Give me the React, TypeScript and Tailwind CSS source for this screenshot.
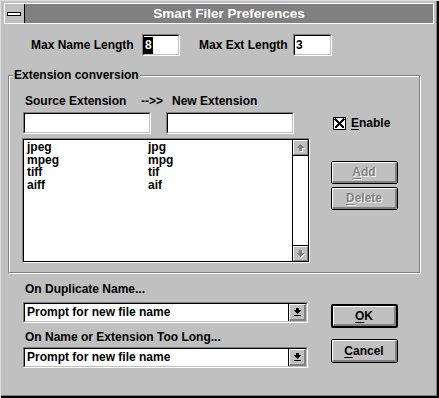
import type { ReactNode } from 'react';

const sans = "font-['Liberation_Sans',Arial,Helvetica,sans-serif]";

function Sunken({ className = '', children }: { className?: string; children?: ReactNode }) {
  return (
    <div className={`border border-t-[#808080] border-l-[#808080] border-b-white border-r-white ${className}`}>
      <div className="flex h-full items-center border border-t-black border-l-black border-b-[#c0c0c0] border-r-[#c0c0c0] bg-white">
        {children}
      </div>
    </div>
  );
}

function Button({
  children,
  disabled,
  isDefault,
  className = '',
}: {
  children: ReactNode;
  disabled?: boolean;
  isDefault?: boolean;
  className?: string;
}) {
  return (
    <div className={`${isDefault ? 'border-2' : 'border'} rounded-[2px] border-black bg-[#c0c0c0] ${className}`}>
      <div className="flex h-full items-center justify-center border-t border-l border-b-2 border-r-2 border-t-white border-l-white border-b-[#808080] border-r-[#808080]">
        <span className={disabled ? 'text-[#808080] [text-shadow:1px_1px_0_#fff]' : 'text-black'}>{children}</span>
      </div>
    </div>
  );
}

function ScrollArrow({ down }: { down?: boolean }) {
  const rows = [
    [3, 1],
    [2, 3],
    [1, 5],
    [0, 7],
    [2, 3],
    [2, 3],
    [2, 3],
  ];
  const ordered = down ? [...rows].reverse() : rows;
  return (
    <svg width="9" height="9" viewBox="0 0 9 9" shapeRendering="crispEdges">
      {ordered.map(([x, w], i) => (
        <rect key={`s${i}`} x={x + 1} y={i + 1} width={w} height={1} fill="#ffffff" />
      ))}
      {ordered.map(([x, w], i) => (
        <rect key={`a${i}`} x={x} y={i} width={w} height={1} fill="#808080" />
      ))}
    </svg>
  );
}

function ScrollButton({ down }: { down?: boolean }) {
  return (
    <div className={`h-[16px] bg-[#c0c0c0] ${down ? 'border-t' : 'border-b'} border-black`}>
      <div className="flex h-full items-center justify-center border-t border-l border-b border-r border-t-white border-l-white border-b-[#808080] border-r-[#808080] pl-[1px] pt-[1px]">
        <ScrollArrow down={down} />
      </div>
    </div>
  );
}

function ComboArrow() {
  return (
    <svg width="7" height="8" viewBox="0 0 7 8" shapeRendering="crispEdges">
      <rect x="2" y="0" width="3" height="2" fill="#000" />
      <rect x="0" y="2" width="7" height="1" fill="#000" />
      <rect x="1" y="3" width="5" height="1" fill="#000" />
      <rect x="2" y="4" width="3" height="1" fill="#000" />
      <rect x="3" y="5" width="1" height="1" fill="#000" />
      <rect x="0" y="7" width="7" height="1" fill="#000" />
    </svg>
  );
}

function Combo({ value }: { value: string }) {
  return (
    <div className="h-[21px] border border-t-[#808080] border-l-[#808080] border-b-white border-r-white">
      <div className="flex h-full border border-t-black border-l-black border-b-[#c0c0c0] border-r-[#c0c0c0] bg-white">
        <span className="flex-1 pl-[2px] leading-[17px]">{value}</span>
        <div className="w-[18px] border-l border-black bg-[#c0c0c0]">
          <div className="flex h-full items-center justify-center border-t border-l border-b-2 border-r-2 border-t-white border-l-white border-b-[#808080] border-r-[#808080]">
            <ComboArrow />
          </div>
        </div>
      </div>
    </div>
  );
}

const conversions = [
  ['jpeg', 'jpg'],
  ['mpeg', 'mpg'],
  ['tiff', 'tif'],
  ['aiff', 'aif'],
];

export default function App() {
  return (
    <div
      className={`${sans} h-[398px] w-[439px] overflow-hidden bg-[#c0c0c0] text-[12px] font-bold leading-[14px] text-black shadow-[inset_1px_1px_0_#dfdfdf,inset_-1px_-1px_0_#000,inset_-2px_-2px_0_#000,inset_-3px_-3px_0_#808080]`}
    >
      {/* title bar */}
      <div className="mx-[4px] mt-[3px] flex h-[21px] w-[430px] border border-white">
        <div className="flex w-[20px] items-center justify-center border-r border-black bg-[#c0c0c0] pr-[1px]">
          <div className="h-[4px] w-[14px] border border-black bg-white" />
        </div>
        <div className="flex flex-1 items-center justify-center bg-[#808080] text-[13.5px] text-white">
          Smart Filer Preferences
        </div>
      </div>

      {/* max lengths */}
      <div className="mt-[10px] flex h-[22px] items-center">
        <span className="w-[142px] pl-[31px]">Max Name Length</span>
        <Sunken className="h-[22px] w-[38px]">
          <span className="ml-[0px] bg-black px-[1px] leading-[17px] text-white">8</span>
        </Sunken>
        <span className="w-[113px] pl-[19px]">Max Ext Length</span>
        <Sunken className="h-[22px] w-[39px]">
          <span className="pl-[1px] leading-[17px]">3</span>
        </Sunken>
      </div>

      {/* extension conversion group */}
      <div className="relative mt-[19px] ml-[8px] h-[198px] w-[412px] border border-[#808080] shadow-[inset_1px_1px_0_#fff,1px_1px_0_#fff]">
        <span className="absolute -top-[8px] left-[4px] bg-[#c0c0c0] px-[1px]">Extension conversion</span>

        <div className="mt-[18px] flex pl-[16px]">
          <span className="w-[116px]">Source Extension</span>
          <span className="w-[31px]">--&gt;&gt;</span>
          <span>New Extension</span>
        </div>

        <div className="mt-[4px] flex items-center pl-[14px]">
          <Sunken className="h-[22px] w-[128px]" />
          <Sunken className="ml-[15px] h-[22px] w-[128px]" />
          <div className="ml-[39px] flex items-center">
            <div className="flex h-[13px] w-[13px] items-center justify-center border border-black bg-white">
              <svg width="11" height="11" viewBox="0 0 11 11" shapeRendering="crispEdges">
                <path d="M1 1 L10 10 M10 1 L1 10" stroke="#000" strokeWidth="1.6" />
              </svg>
            </div>
            <span className="ml-[5px]">
              <span className="underline underline-offset-2">E</span>nable
            </span>
          </div>
        </div>

        <div className="mt-[4px] flex pl-[13px]">
          <div className="h-[125px] w-[288px] border border-t-[#808080] border-l-[#808080] border-b-white border-r-white">
            <div className="flex h-full border border-black bg-white">
              <div className="flex-1 pt-[1px] pl-[3px] leading-[12.5px]">
                {conversions.map(([from, to]) => (
                  <div key={from} className="grid grid-cols-[121px_1fr]">
                    <span>{from}</span>
                    <span>{to}</span>
                  </div>
                ))}
              </div>
              <div className="flex w-[16px] flex-col justify-between border-l border-black bg-white">
                <ScrollButton />
                <ScrollButton down />
              </div>
            </div>
          </div>
          <div className="ml-[21px] flex flex-col pt-[23px]">
            <Button disabled className="h-[23px] w-[67px]">
              <span className="underline underline-offset-2">A</span>dd
            </Button>
            <Button disabled className="mt-[3px] h-[23px] w-[67px]">
              <span className="underline underline-offset-2">D</span>elete
            </Button>
          </div>
        </div>
      </div>

      {/* duplicate / too long */}
      <div className="flex">
        <div className="ml-[23px] w-[285px]">
          <div className="mt-[9px] pl-[2px]">On Duplicate Name...</div>
          <div className="mt-[6px]">
            <Combo value="Prompt for new file name" />
          </div>
          <div className="mt-[7px] pl-[2px]">On Name or Extension Too Long...</div>
          <div className="mt-[3px]">
            <Combo value="Prompt for new file name" />
          </div>
        </div>
        <div className="ml-[23px] flex w-[67px] flex-col pt-[31px]">
          <Button isDefault className="h-[24px] w-[67px]">
            <span className="underline underline-offset-2">O</span>K
          </Button>
          <Button className="mt-[11px] h-[24px] w-[67px]">
            <span className="underline underline-offset-2">C</span>ancel
          </Button>
        </div>
      </div>
    </div>
  );
}
